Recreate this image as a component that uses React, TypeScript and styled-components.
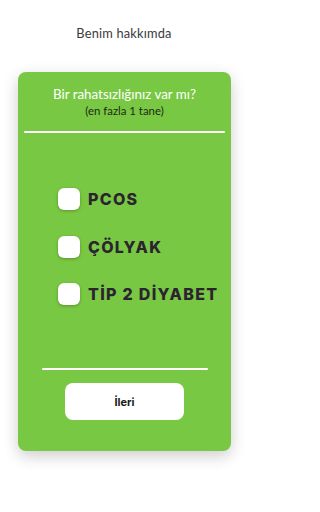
import React, { useState } from "react";
import styled, { createGlobalStyle } from "styled-components";

const Global = createGlobalStyle`
  html, body { margin: 0; padding: 0; background: #ffffff; }
  body { font-family: "Open Sans", "Noto Sans", sans-serif; }
`;

const Page = styled.div`
  width: 248px;
  height: 512px;
  display: flex;
  flex-direction: column;
  align-items: center;
  box-sizing: border-box;
  padding-top: 24px;
`;

const Title = styled.h1`
  margin: 0;
  font-family: "Lato", "Open Sans", sans-serif;
  font-weight: 400;
  font-size: 12.8px;
  line-height: 18px;
  color: #3a3a3a;
  letter-spacing: 0.2px;
`;

const Card = styled.div`
  margin-top: 30px;
  width: 213px;
  height: 379px;
  margin-left: 1px;
  background: #78c843;
  border-radius: 8px;
  box-shadow: 0 5px 16px rgba(0, 0, 0, 0.2);
  display: flex;
  flex-direction: column;
  align-items: center;
  box-sizing: border-box;
  padding-top: 14px;
`;

const Question = styled.div`
  font-family: "Lato", "Open Sans", sans-serif;
  font-size: 13.4px;
  line-height: 17px;
  color: #ffffff;
`;

const Hint = styled.div`
  font-family: "Lato", "Open Sans", sans-serif;
  font-size: 11.4px;
  line-height: 15px;
  color: #1f2a14;
`;

const Divider = styled.div<{ $w: number }>`
  width: ${(p) => p.$w}px;
  height: 2px;
  background: #ffffff;
  border-radius: 1px;
`;

const TopDivider = styled(Divider)`
  margin-top: 13px;
`;

const Options = styled.div`
  margin-top: 55px;
  display: flex;
  flex-direction: column;
  gap: 25.5px;
  align-self: flex-start;
  padding-left: 40px;
`;

const Option = styled.label`
  display: flex;
  align-items: center;
  gap: 8px;
  cursor: pointer;
  height: 22px;
`;

const Box = styled.span<{ $on: boolean }>`
  width: 22px;
  height: 22px;
  border-radius: 6px;
  background: #ffffff;
  box-shadow: 0 1px 3px rgba(60, 80, 20, 0.45);
  display: flex;
  align-items: center;
  justify-content: center;
  color: #78c843;
  font-size: 14px;
  font-weight: 700;
`;

const Label = styled.span`
  font-family: "Inter", "Roboto", sans-serif;
  font-weight: 800;
  font-size: 16px;
  color: #2b2430;
  letter-spacing: 1.3px;
`;

const BottomDivider = styled(Divider)`
  margin-top: 63px;
`;

const Button = styled.button`
  margin-top: 13px;
  width: 119px;
  height: 37px;
  border: none;
  border-radius: 8px;
  background: #ffffff;
  font-family: "Inter", "Roboto", sans-serif;
  font-weight: 700;
  font-size: 11px;
  color: #1a1a1a;
  cursor: pointer;
`;

const items = ["PCOS", "ÇÖLYAK", "TİP 2 DİYABET"];

export default function App() {
  const [sel, setSel] = useState<number | null>(null);
  return (
    <>
      <Global />
      <Page>
        <Title>Benim hakkımda</Title>
        <Card>
          <Question>Bir rahatsızlığınız var mı?</Question>
          <Hint>(en fazla 1 tane)</Hint>
          <TopDivider $w={201} />
          <Options>
            {items.map((t, i) => (
              <Option key={t} onClick={() => setSel(sel === i ? null : i)}>
                <Box $on={sel === i}>{sel === i ? "✓" : ""}</Box>
                <Label>{t}</Label>
              </Option>
            ))}
          </Options>
          <BottomDivider $w={166} />
          <Button>İleri</Button>
        </Card>
      </Page>
    </>
  );
}
